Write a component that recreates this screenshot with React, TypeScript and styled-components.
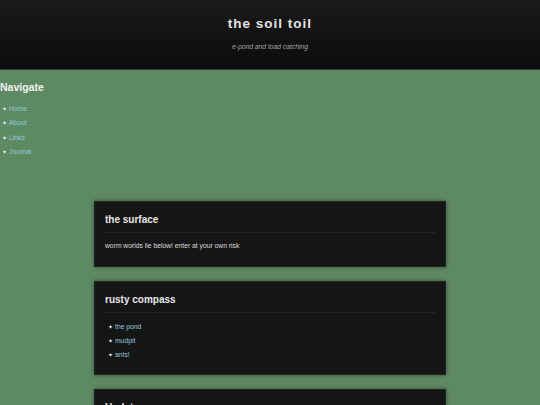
import React from "react";
import styled, { createGlobalStyle } from "styled-components";

const Global = createGlobalStyle`
  html, body {
    margin: 0;
    padding: 0;
    background: #5e8a63;
    font-family: "Liberation Sans", Arial, sans-serif;
    color: #e6e6e6;
  }
`;

const Header = styled.header`
  height: 69px;
  border-bottom: 1px solid #3b3f3b;
  background: linear-gradient(to bottom, #1b1b1b 0%, #111111 60%, #0d0d0d 100%);
  display: flex;
  flex-direction: column;
  align-items: center;
`;

const Title = styled.h1`
  margin: 16px 0 0;
  font-size: 13.5px;
  line-height: 16px;
  font-weight: bold;
  letter-spacing: 1px;
  color: #e4e4e4;
`;

const Tagline = styled.p`
  margin: 11px 0 0;
  font-size: 6.75px;
  line-height: 8px;
  font-style: italic;
  color: #a4a4a4;
`;

const Sidebar = styled.nav`
  padding-top: 11px;
`;

const SideHeading = styled.h3`
  margin: 0;
  font-size: 10.5px;
  line-height: 12px;
  font-weight: bold;
  color: #f2f2f2;
`;

const BulletList = styled.ul<{ $indent: number }>`
  list-style: none;
  margin: 0;
  padding: 0 0 0 ${(p) => p.$indent}px;
`;

const Item = styled.li<{ $pitch: number }>`
  font-size: 6.75px;
  line-height: ${(p) => p.$pitch}px;
  display: flex;
  align-items: center;
  &::before {
    content: "✦";
    color: #f4f4f4;
    font-family: "DejaVu Sans", sans-serif;
    font-size: 6px;
    width: 7px;
  }
`;

const Link = styled.a`
  color: #93c9de;
  text-decoration: none;
`;

const SideList = styled(BulletList)`
  margin-top: 9px;
`;

const Main = styled.main`
  width: 352px;
  margin: 42px auto 0;
  display: flex;
  flex-direction: column;
  gap: 14px;
`;

const Card = styled.section`
  background: #151515;
  border: 1px solid #232323;
  box-shadow: 0 0 4px rgba(0, 0, 0, 0.45);
  padding: 12px 10px 0;
`;

const CardTitle = styled.h2`
  margin: 0;
  padding-bottom: 6px;
  font-size: 10px;
  line-height: 12px;
  font-weight: bold;
  color: #e8e8e8;
  border-bottom: 1px dotted #2e2e2e;
`;

const CardText = styled.p`
  margin: 8px 0 15px;
  font-size: 6.75px;
  line-height: 10px;
  color: #dcdcdc;
`;

const CardList = styled(BulletList)`
  margin: 7px 0 12px;
`;

const navLinks = ["Home", "About", "Links", "Journal"];
const compass = ["the pond", "mudpit", "ants!"];

export default function App() {
  return (
    <>
      <Global />
      <Header>
        <Title>the soil toil</Title>
        <Tagline>e-pond and toad catching</Tagline>
      </Header>
      <Sidebar>
        <SideHeading>Navigate</SideHeading>
        <SideList $indent={2}>
          {navLinks.map((l) => (
            <Item key={l} $pitch={14.3}>
              <Link href="#">{l}</Link>
            </Item>
          ))}
        </SideList>
      </Sidebar>
      <Main>
        <Card>
          <CardTitle>the surface</CardTitle>
          <CardText>worm worlds lie below! enter at your own risk</CardText>
        </Card>
        <Card>
          <CardTitle>rusty compass</CardTitle>
          <CardList $indent={3}>
            {compass.map((l) => (
              <Item key={l} $pitch={14}>
                <Link href="#">{l}</Link>
              </Item>
            ))}
          </CardList>
        </Card>
        <Card>
          <CardTitle>Updates</CardTitle>
          <CardText>more soon</CardText>
        </Card>
      </Main>
    </>
  );
}
